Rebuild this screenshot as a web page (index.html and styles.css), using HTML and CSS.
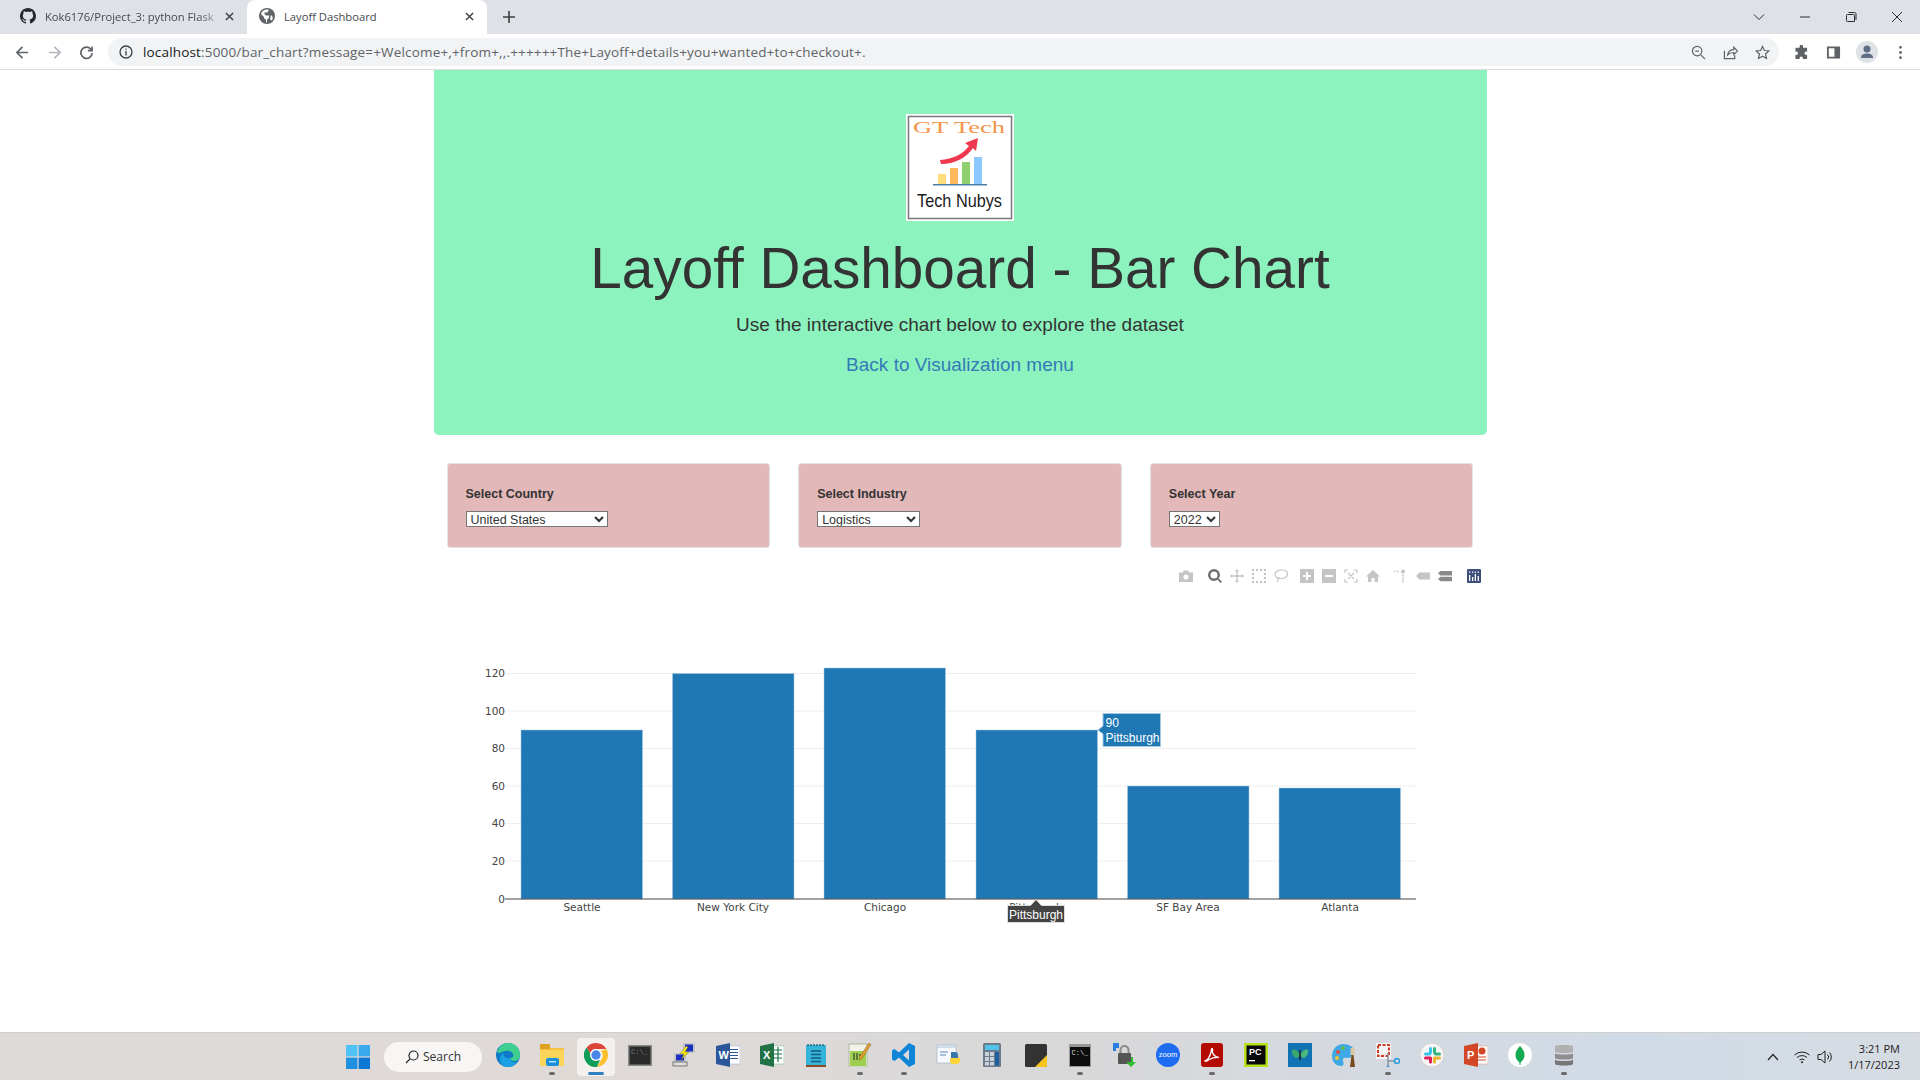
FILE: index.html
```html
<!DOCTYPE html>
<html>
  <head>
    <meta charset="UTF-8" />
    <title>Layoff Dashboard</title>
    <link rel="stylesheet" href="styles.css">
  </head>

  <body>
    <div class="tabstrip">
      <div class="tab">
        <svg class="favicon" viewBox="0 0 16 16"><path fill="#24292f" d="M8 0C3.6 0 0 3.6 0 8c0 3.5 2.3 6.5 5.5 7.6.4.1.5-.2.5-.4v-1.4c-2.2.5-2.7-1.1-2.7-1.1-.4-.9-.9-1.2-.9-1.2-.7-.5.1-.5.1-.5.8.1 1.2.8 1.2.8.7 1.2 1.9.9 2.3.7.1-.5.3-.9.5-1.1-1.8-.2-3.6-.9-3.6-4 0-.9.3-1.6.8-2.1-.1-.2-.4-1 .1-2.1 0 0 .7-.2 2.2.8.6-.2 1.3-.3 2-.3s1.4.1 2 .3c1.5-1 2.2-.8 2.2-.8.4 1.1.2 1.9.1 2.1.5.6.8 1.3.8 2.1 0 3.1-1.9 3.7-3.7 3.9.3.3.6.8.6 1.5v2.2c0 .2.1.5.6.4C13.7 14.5 16 11.5 16 8c0-4.4-3.6-8-8-8z"/></svg>
        <span class="tab-title fade">Kok6176/Project_3: python Flask</span>
        <svg class="tab-close" viewBox="0 0 10 10"><path d="M1 1l8 8M9 1l-8 8"/></svg>
      </div>
      <div class="tab active">
        <svg class="favicon" viewBox="0 0 16 16"><circle cx="8" cy="8" r="8" fill="#5f6368"/><path fill="#fff" d="M7 1.5C4.5 2 2.6 3.800 2 6l3 3v1l2 2v2.300l1 .2v-3l2-1.500V7.500H7L5.500 6V4.500H8l1.500-1.500V1.600z"/><path fill="#fff" d="M11 11.500l2 1 .8-2.500-.8-2.500h-1.500v2z"/></svg>
        <span class="tab-title">Layoff Dashboard</span>
        <svg class="tab-close" viewBox="0 0 10 10"><path d="M1 1l8 8M9 1l-8 8"/></svg>
      </div>
      <svg class="new-tab" viewBox="0 0 12 12"><path d="M6 0v12M0 6h12"/></svg>
      <div class="window-controls">
        <svg viewBox="0 0 12 12"><path d="M1 3.500l5 5 5-5"/></svg>
        <svg viewBox="0 0 12 12"><path d="M1 6h10"/></svg>
        <svg viewBox="0 0 12 12"><path d="M2.500 3.500h6a1 1 0 0 1 1 1v6h-7a1 1 0 0 1-1-1v-5a1 1 0 0 1 1-1zM3.500 1.500h6a1.500 1.500 0 0 1 1.500 1.500v6"/></svg>
        <svg viewBox="0 0 12 12"><path d="M1 1l10 10M11 1L1 11"/></svg>
      </div>
    </div>

    <div class="toolbar">
      <svg class="nav-icon" viewBox="0 0 16 16"><path d="M14 8H2.500M8 2L2 8l6 6"/></svg>
      <svg class="nav-icon off" viewBox="0 0 16 16"><path d="M2 8h11.500M8 2l6 6-6 6"/></svg>
      <svg class="nav-icon" viewBox="0 0 16 16"><path d="M13 5a6 6 0 1 0 1 3.500M14 1.500V6H9.500"/></svg>
      <div class="omnibox">
        <svg class="info" viewBox="0 0 14 14"><circle cx="7" cy="7" r="6"/><path d="M7 6v4.500M7 3.500v1.300"/></svg>
        <span class="url"><b>localhost</b>:5000/bar_chart?message=+Welcome+,+from+,,.++++++The+Layoff+details+you+wanted+to+checkout+.</span>
        <div class="omni-actions">
          <svg viewBox="0 0 16 16"><circle cx="6.500" cy="6.500" r="5"/><path d="M4.500 6.500h4M10.500 10.500l4.500 4.500"/></svg>
          <svg viewBox="0 0 16 16"><path d="M1.500 6v8.500h11V11M5 10.500c.5-3.500 3-5.500 6.500-5.500V2.500L15.500 6.500 11.500 10V8c-2.500 0-5 .8-6.500 2.500z"/></svg>
          <svg viewBox="0 0 16 16"><path d="M8 1.500l2 4.400 4.800.5-3.600 3.200 1 4.700L8 11.900l-4.200 2.400 1-4.700L1.200 6.400 6 5.900z"/></svg>
        </div>
      </div>
      <div class="profile-actions">
        <svg viewBox="0 0 16 16"><path class="solid" d="M6 1.500a1.800 1.800 0 0 1 3.600 0V3H13a1 1 0 0 1 1 1v3h-1a1.800 1.800 0 0 0 0 3.600h1V14a1 1 0 0 1-1 1H9.500v-1a1.800 1.800 0 0 0-3.600 0v1H2.500a1 1 0 0 1-1-1v-3.400h1a1.800 1.800 0 0 0 0-3.600h-1V4a1 1 0 0 1 1-1H6z"/></svg>
        <svg viewBox="0 0 16 16"><path class="solid" d="M1 1.500h14v13H1zM3 3.500v9h6v-9z" fill-rule="evenodd"/></svg>
        <svg class="avatar" viewBox="0 0 22 22"><circle cx="11" cy="11" r="11" fill="#dee1e6"/><circle cx="11" cy="8" r="3.500" fill="#5f6e85"/><path fill="#5f6e85" d="M5 17c0-3.500 3-4.500 6-4.500s6 1 6 4.500z"/></svg>
        <svg viewBox="0 0 16 16"><path class="solid" d="M6.500 2.500a1.500 1.500 0 1 0 3 0 1.500 1.500 0 1 0-3 0M6.500 8a1.500 1.500 0 1 0 3 0 1.500 1.500 0 1 0-3 0M6.500 13.500a1.500 1.500 0 1 0 3 0 1.500 1.500 0 1 0-3 0"/></svg>
      </div>
    </div>

    <div class="page">
      <div class="container">
        <div class="jumbotron">
          <svg class="logo" viewBox="0 0 108 107">
            <rect width="108" height="107" fill="#fff"/>
            <rect x="2.500" y="2.500" width="103" height="102" fill="none" stroke="#777" stroke-width="1.500"/>
            <text x="7" y="19" class="logo-top" textLength="92" lengthAdjust="spacingAndGlyphs">GT Tech</text>
            <path d="M34 46c13-1 23-6 29-14l-4-3 13-5-2 13-3-3c-7 10-18 16-32 16z" fill="#f0384f"/>
            <rect x="32" y="60" width="8" height="10" fill="#ffdd7a"/>
            <rect x="44" y="54" width="8" height="16" fill="#ffb85c"/>
            <rect x="56" y="48" width="8" height="22" fill="#90cf70"/>
            <rect x="68" y="43" width="8" height="27" fill="#8cc8ff"/>
            <rect x="27" y="70" width="54" height="1.500" fill="#4a7fa5"/>
            <text x="11" y="93" class="logo-bottom" textLength="85" lengthAdjust="spacingAndGlyphs">Tech Nubys</text>
          </svg>
          <h1>Layoff Dashboard - Bar Chart</h1>
          <p>Use the interactive chart below to explore the dataset</p>
          <a href="#">Back to Visualization menu</a>
        </div>

        <div class="filters">
          <div class="filter-card">
            <label for="country">Select Country</label>
            <select id="country" class="select-country"><option>United States</option></select>
          </div>
          <div class="filter-card">
            <label for="industry">Select Industry</label>
            <select id="industry" class="select-industry"><option>Logistics</option></select>
          </div>
          <div class="filter-card">
            <label for="year">Select Year</label>
            <select id="year" class="select-year"><option>2022</option></select>
          </div>
        </div>

        <div class="chart">
          <div class="modebar">
            <svg class="m-camera" viewBox="0 0 14 12"><path d="M0 2.500h3.500L5 .5h4l1.500 2H14V12H0z"/><circle cx="7" cy="7" r="2.600" fill="#fff"/></svg>
            <svg class="m-active" viewBox="0 0 14 14"><path d="M6 0a6 6 0 1 0 0 12A6 6 0 1 0 6 0zm0 2.500a3.500 3.500 0 1 1 0 7 3.500 3.500 0 1 1 0-7z" fill-rule="evenodd"/><path d="M9.500 10.800l1.300-1.300 3.200 3.200-1.300 1.300z"/></svg>
            <svg viewBox="0 0 14 14"><path d="M7 0l2 2.200H7.700v4.100h4.100V5L14 7l-2.200 2V7.700H7.700v4.100H9L7 14l-2-2.200h1.300V7.700H2.200V9L0 7l2.200-2v1.300h4.100V2.200H5z"/></svg>
            <svg viewBox="0 0 14 14"><path d="M0 0h2v2H0zM4 0h2v2H4zM8 0h2v2H8zM12 0h2v2h-2zM0 4h2v2H0zM12 4h2v2h-2zM0 8h2v2H0zM12 8h2v2h-2zM0 12h2v2H0zM4 12h2v2H4zM8 12h2v2H8zM12 12h2v2h-2z"/></svg>
            <svg viewBox="0 0 14 14"><path class="hollow" d="M7.500 1c3.500 0 6 1.600 6 4s-3 4.500-6.500 4.500C3.500 9.500 1 7.800 1 5.300S4 1 7.500 1zM3.500 8.500c.8 1.500.5 3.200-.3 4.700"/></svg>
            <svg class="m-gap-small" viewBox="0 0 14 14"><path d="M0 0h14v14H0zM6 3v3H3v2h3v3h2V8h3V6H8V3z" fill-rule="evenodd"/></svg>
            <svg viewBox="0 0 14 14"><path d="M0 0h14v14H0zM3 6v2h8V6z" fill-rule="evenodd"/></svg>
            <svg viewBox="0 0 14 14"><path class="hollow" d="M1 4V1h3M10 1h3v3M13 10v3h-3M4 13H1v-3M4 4l6 6M10 4l-6 6"/></svg>
            <svg viewBox="0 0 14 14"><path d="M7 1L0 7.500h2V13h3.500V9h3v4H12V7.500h2z"/></svg>
            <svg class="m-gap" viewBox="0 0 14 14"><circle cx="9" cy="2.500" r="2"/><path d="M8.300 5.500h1.400v2H8.300zM8.300 8.500h1.400v2H8.300zM8.300 11.500h1.400v2H8.300zM0 1.800h1.500v1.500H0zM3 1.800h1.500v1.500H3z"/></svg>
            <svg viewBox="0 0 14 14"><path d="M0 7l3.500-3.500H14v7H3.500z"/></svg>
            <svg class="m-dark" viewBox="0 0 14 14"><path d="M2.500 2H14v4.500H2.500L0 4.300zM2.500 7.800H14v4.400H2.500L0 10z"/></svg>
            <svg class="m-logo" viewBox="0 0 14 14"><rect width="14" height="14" rx="1" fill="#3d4f7a"/><g fill="#fff"><rect x="2" y="6" width="1.300" height="6"/><rect x="5" y="8" width="1.300" height="4"/><rect x="7.700" y="5" width="1.300" height="7"/><rect x="10.600" y="7" width="1.300" height="5"/><rect x="2" y="2.500" width="1.300" height="1.300"/><rect x="5" y="2.500" width="1.300" height="1.300"/><rect x="7.700" y="2.500" width="1.300" height="1.300"/><rect x="10.600" y="2.500" width="1.300" height="1.300"/></g></svg>
          </div>

          <svg class="plot" viewBox="434 561 1053 470">
            <g class="grid">
              <path d="M505 673.500H1416M505 711H1416M505 748.500H1416M505 786H1416M505 823.500H1416M505 861H1416"/>
            </g>
            <g class="bars">
              <rect x="521" y="730" width="121.500" height="169"/>
              <rect x="672.500" y="673.500" width="121.500" height="225.500"/>
              <rect x="824" y="668" width="121.500" height="231"/>
              <rect x="976" y="730" width="121.500" height="169"/>
              <rect x="1127.500" y="786" width="121.500" height="113"/>
              <rect x="1279" y="788" width="121.500" height="111"/>
            </g>
            <path class="axis" d="M505 899H1416"/>
            <g class="tick-y">
              <text x="505" y="677">120</text>
              <text x="505" y="715">100</text>
              <text x="505" y="752">80</text>
              <text x="505" y="790">60</text>
              <text x="505" y="827">40</text>
              <text x="505" y="865">20</text>
              <text x="505" y="903">0</text>
            </g>
            <g class="tick-x">
              <text x="582" y="911">Seattle</text>
              <text x="733" y="911">New York City</text>
              <text x="885" y="911">Chicago</text>
              <text x="1036" y="911">Pittsburgh</text>
              <text x="1188" y="911">SF Bay Area</text>
              <text x="1340" y="911">Atlanta</text>
            </g>
            <path class="hover-blue" d="M1103 713.500h57.500v33H1103v-12.500l-5-4 5-4z"/>
            <text class="hover-text" x="1105.500" y="727">90</text>
            <text class="hover-text" x="1105.500" y="742">Pittsburgh</text>
            <path class="hover-dark" d="M1007.500 905.500h23l5.500-6 5.500 6h23v17h-57z"/>
            <text class="hover-text centered" x="1036" y="918.500">Pittsburgh</text>
          </svg>
        </div>
      </div>
    </div>

    <div class="taskbar">
      <svg class="start" viewBox="0 0 24 24"><rect width="11.400" height="11.400" fill="#4fc3f7"/><rect x="12.600" width="11.400" height="11.400" fill="#38a9ec"/><rect y="12.600" width="11.400" height="11.400" fill="#1e90e0"/><rect x="12.600" y="12.600" width="11.400" height="11.400" fill="#0a78d4"/></svg>
      <div class="search">
        <svg viewBox="0 0 14 14"><circle cx="8.500" cy="5.500" r="4.500"/><path d="M5.300 8.700L1 13"/></svg>
        <span>Search</span>
      </div>
      <div class="apps">
        <div class="app"><svg viewBox="0 0 24 24"><circle cx="12" cy="12" r="12" fill="#0f7bc8"/><path d="M1 9C3 3 8 0 12 0c7 0 12 5 12 12 0 4-3 6-6 6-2 0-4-1-4-3 3 0 4-2 3-4-1-3-5-4-8-3-4 1-7 3-8 1z" fill="#3fcf8e"/><path d="M14 15c0 3 3 5 7 4-2 3-5 5-9 5-5 0-8-4-8-8 0-3 2-5 4-6-1 3 1 6 6 5z" fill="#1ba1e2"/></svg></div>
        <div class="app running"><svg viewBox="0 0 24 24"><path d="M0 3h9l2 2h13v18H0z" fill="#f5c242"/><rect y="1" width="10" height="5" rx="1" fill="#e0a020"/><path d="M0 7h24v16H0z" fill="#fbd55a"/><rect x="6" y="15" width="13" height="8" rx="2" fill="#1890df"/><rect x="9" y="18" width="7" height="1.500" fill="#fff" opacity=".7"/></svg></div>
        <div class="app active"><svg viewBox="0 0 24 24"><path d="M12 0a12 12 0 0 1 10.400 6H12a6 6 0 0 0-5.800 4.500L2.700 4.400A12 12 0 0 1 12 0z" fill="#db4437"/><path d="M22.400 6A12 12 0 0 1 13 24l5.200-9A6 6 0 0 0 16.500 8z" fill="#fbc02d"/><path d="M13 24A12 12 0 0 1 2.700 4.400L8 13.500a6 6 0 0 0 8.500 2z" fill="#0f9d58"/><circle cx="12" cy="12" r="6" fill="#fff"/><circle cx="12" cy="12" r="4.700" fill="#4a86e8"/></svg></div>
        <div class="app"><svg viewBox="0 0 24 24"><rect y="2" width="24" height="21" fill="#888"/><rect x="1.500" y="3.500" width="21" height="18" fill="#2a2a2a"/><text x="3" y="11" class="icon-text faint">C:\_</text></svg></div>
        <div class="app"><svg viewBox="0 0 24 24"><rect x="11" y="0" width="12" height="10" fill="#c6c6c6"/><rect x="13" y="1.500" width="8" height="7" fill="#1a2fc0"/><rect x="2" y="10" width="12" height="9" fill="#c6c6c6"/><rect x="4" y="11.500" width="8" height="6" fill="#1a2fc0"/><rect x="1" y="19" width="14" height="4" fill="#ddd" stroke="#333" stroke-width=".6"/><path d="M14 3L8 11h4l-3 6 8-8h-4l3-5z" fill="#f5e614" stroke="#333" stroke-width=".3"/></svg></div>
        <div class="app"><svg viewBox="0 0 24 24"><rect x="8" y="3" width="16" height="18" fill="#fff" stroke="#9db4d8" stroke-width=".6"/><path d="M13 6.500h9M13 9.500h9M13 12.500h9M13 15.500h9" stroke="#2b579a" stroke-width="1.200"/><path d="M0 3l14-3v24L0 21z" fill="#2b579a"/><text x="2.500" y="15.500" class="icon-text letter">W</text></svg></div>
        <div class="app"><svg viewBox="0 0 24 24"><rect x="8" y="3" width="16" height="18" fill="#fff" stroke="#8bbf9f" stroke-width=".6"/><path d="M14 7h8M14 11h8M14 15h8M18 4v15" stroke="#217346" stroke-width="1.200"/><path d="M0 3l14-3v24L0 21z" fill="#217346"/><text x="3" y="15.500" class="icon-text letter">X</text></svg></div>
        <div class="app"><svg viewBox="0 0 24 24"><rect x="2" y="2" width="20" height="20" fill="#36b4d8"/><rect x="2" y="22" width="20" height="2" fill="#8a4b20"/><path d="M4 1v2M7 1v2M10 1v2M13 1v2M16 1v2M19 1v2" stroke="#1a5670" stroke-width="1.200"/><path d="M7 8h10M7 11.500h10M7 15h10M7 18.500h10" stroke="#155a80" stroke-width="1.500"/></svg></div>
        <div class="app running"><svg viewBox="0 0 24 24"><rect x="1" y="1" width="18" height="23" fill="#f2f2e8" stroke="#8a9a70" stroke-width=".6"/><rect x="2" y="8" width="16" height="15" fill="#9fcf50"/><path d="M6 10v7M9 10v7M11 12h2" stroke="#222" stroke-width="1"/><path d="M21 0l2 1.500-9 14-3 1.500.5-3z" fill="#e0a030" stroke="#7a4a20" stroke-width=".4"/></svg></div>
        <div class="app running"><svg viewBox="0 0 24 24"><path d="M17 0l6 3v18l-6 3-10-9.500L2.500 18 0 16.500v-9L2.500 6 7 9.500zM17 6.500L11 12l6 5.500z" fill="#0f85d8" fill-rule="evenodd"/></svg></div>
        <div class="app"><svg viewBox="0 0 24 24"><rect x="1" y="2" width="19" height="18" fill="#f5f8fc" stroke="#9ab" stroke-width=".6"/><rect x="1" y="2" width="19" height="3" fill="#cfdcec"/><path d="M4 9h8M4 12h6" stroke="#5a86b8" stroke-width="1.200"/><path d="M15 9h4c2 0 3 1 3 3v3h-7z" fill="#3776ab"/><path d="M24 13v5c0 2-2 3-4 3h-3c-2 0-3-1-3-3v-3h6c2 0 4 0 4-2z" fill="#ffd43b"/></svg></div>
        <div class="app"><svg viewBox="0 0 24 24"><rect x="3" y="0" width="18" height="24" rx="1.500" fill="#6c7a89"/><rect x="5" y="2" width="14" height="5" fill="#4fc3e8"/><g fill="#c8d0d8"><rect x="5" y="9" width="4" height="4"/><rect x="10" y="9" width="4" height="4"/><rect x="5" y="14" width="4" height="4"/><rect x="10" y="14" width="4" height="4"/><rect x="5" y="19" width="4" height="3.500"/><rect x="10" y="19" width="4" height="3.500"/></g><rect x="15" y="9" width="4" height="13.500" fill="#1f5f9f"/></svg></div>
        <div class="app"><svg viewBox="0 0 24 24"><rect x="1" y="1" width="22" height="23" rx="1.500" fill="#333"/><path d="M23 12v10.500a1.500 1.500 0 0 1-1.500 1.500H11z" fill="#f8c51c"/></svg></div>
        <div class="app running"><svg viewBox="0 0 24 24"><rect x="1" y="1" width="22" height="23" fill="#999"/><rect x="2" y="4" width="20" height="19" fill="#0c0c0c"/><text x="3.500" y="12" class="icon-text light">C:\_</text></svg></div>
        <div class="app"><svg viewBox="0 0 24 24"><path d="M1 0h6v5H4v3H1z" fill="#2a7de1"/><rect x="6" y="10" width="13" height="11" rx="1" fill="#555"/><path d="M8.500 10V7a4 4 0 0 1 8 0v3" fill="none" stroke="#8a8a8a" stroke-width="2"/><path d="M19 14h2v5h3l-5 5-5-5h5z" fill="#2ebd2e"/></svg></div>
        <div class="app"><svg viewBox="0 0 24 24"><ellipse cx="12" cy="12" rx="12" ry="12" fill="#1e6cf0"/><text x="12" y="14" class="icon-text zoom-word">zoom</text></svg></div>
        <div class="app running"><svg viewBox="0 0 24 24"><rect x="1" y="0" width="22" height="24" rx="3" fill="#b30b00"/><path d="M5 18c3-1 5-5 6-9 .3-1.500.2-3.500 1-3.500s.8 2 .3 3.500c1 3 3 5 6.500 5.500-3-.2-7 .5-9.500 2-1.500 1-3 2.500-4.300 1.500z" fill="none" stroke="#fff" stroke-width="1.300"/></svg></div>
        <div class="app"><svg viewBox="0 0 24 24"><rect width="24" height="24" fill="#b6e21e"/><rect x="2.500" y="2.500" width="19" height="19" fill="#0a0a0a"/><text x="5" y="12" class="icon-text pc">PC</text><rect x="5" y="17" width="6" height="1.300" fill="#fff"/></svg></div>
        <div class="app"><svg viewBox="0 0 24 24"><rect width="24" height="24" fill="#1173b4"/><path d="M12 12C9 6 5 6 4 7c-1 2 1 7 4 8 2 0 3-1 4-3z" fill="#3aa86a"/><path d="M12 12c3-6 7-6 8-5 1 2-1 7-4 8-2 0-3-1-4-3z" fill="#4ab878"/><path d="M12 7v10" stroke="#222" stroke-width="1.500"/></svg></div>
        <div class="app"><svg viewBox="0 0 24 24"><path d="M11 1C5 1 0 6 0 13c0 6 4 10 9 10 3 0 3-3 2-5s1-4 4-3c4 .5 7-3 7-7 0-4-5-7-11-7z" fill="#3fa9e6"/><circle cx="6" cy="9" r="2" fill="#e24b3b"/><circle cx="11" cy="5" r="2" fill="#5cc04b"/><circle cx="5" cy="15" r="2" fill="#f2c230"/><path d="M18 24l1.500-12h2L23 24z" fill="#7a4a20"/><rect x="18.500" y="5" width="4" height="7" fill="#d8c8a8"/></svg></div>
        <div class="app running"><svg viewBox="0 0 24 24"><rect width="15" height="16" fill="#f5f5f5"/><path d="M2 2h11v11H2z" fill="none" stroke="#d0382a" stroke-width="2" stroke-dasharray="3 1.500"/><path d="M12 10v14M12 18h7" stroke="#8a96a3" stroke-width="1.500"/><circle cx="21" cy="18" r="2.500" fill="none" stroke="#2a9ad8" stroke-width="1.500"/><circle cx="12" cy="24" r="1.500" fill="#2a9ad8"/></svg></div>
        <div class="app"><svg viewBox="0 0 24 24"><circle cx="12" cy="12" r="12" fill="#f6f4f4" stroke="#bbb" stroke-width=".5"/><rect x="9" y="4" width="3" height="7" rx="1.500" fill="#36c5f0"/><rect x="4" y="9.500" width="7" height="3" rx="1.500" fill="#36c5f0"/><rect x="13" y="4" width="3" height="7" rx="1.500" fill="#2eb67d"/><rect x="14" y="9.500" width="7" height="3" rx="1.500" fill="#2eb67d"/><rect x="13" y="13.500" width="3" height="7" rx="1.500" fill="#ecb22e"/><rect x="14" y="13.500" width="7" height="3" rx="1.500" fill="#ecb22e"/><rect x="9" y="13.500" width="3" height="7" rx="1.500" fill="#e01e5a"/><rect x="4" y="13.500" width="7" height="3" rx="1.500" fill="#e01e5a"/></svg></div>
        <div class="app"><svg viewBox="0 0 24 24"><rect x="10" y="3" width="14" height="18" fill="#fff" stroke="#e0a090" stroke-width=".6"/><circle cx="18" cy="8" r="3.500" fill="#d24726"/><path d="M13 14h9M13 17h9" stroke="#d24726" stroke-width="1.200"/><path d="M0 3l14-3v24L0 21z" fill="#d24726"/><text x="3" y="16" class="icon-text letter">P</text></svg></div>
        <div class="app"><svg viewBox="0 0 24 24"><circle cx="12" cy="12" r="12" fill="#fff"/><path d="M12 3c3 3 4.500 6 4.500 9 0 4-2.500 6-4 7.500V22h-1v-2.500c-1.500-1.500-4-3.500-4-7.500 0-3 1.500-6 4.500-9z" fill="#13aa52"/></svg></div>
        <div class="app running"><svg viewBox="0 0 24 24"><path d="M3 3.500C3 1.500 21 1.500 21 3.500v5C21 10.500 3 10.500 3 8.500z" fill="#b0b0b0"/><path d="M3 10c0 2 18 2 18 0v5c0 2-18 2-18 0z" fill="#8e8e8e"/><path d="M3 16.500c0 2 18 2 18 0V21c0 2-18 2-18 0z" fill="#767676"/></svg></div>
      </div>
      <div class="tray">
        <svg class="tray-chevron" viewBox="0 0 12 8"><path d="M1 7l5-5.500L11 7"/></svg>
        <svg class="tray-icon" viewBox="0 0 16 14"><path d="M.5 5a11 11 0 0 1 15 0M3 7.500a7.500 7.500 0 0 1 10 0M5.500 10a4 4 0 0 1 5 0"/><circle cx="8" cy="12.300" r="1" fill="#222" stroke="none"/></svg>
        <svg class="tray-icon" viewBox="0 0 16 14"><path d="M1 4.500h3L8 1v12L4 9.500H1zM10.500 4.500a3.500 3.500 0 0 1 0 5M12.500 2.500a6.500 6.500 0 0 1 0 9"/></svg>
        <div class="clock">
          <span>3:21 PM</span>
          <span>1/17/2023</span>
        </div>
      </div>
    </div>
  </body>
</html>
```

FILE: styles.css
```css
* {
  box-sizing: border-box;
}

body {
  margin: 0;
  height: 1080px;
  overflow: hidden;
  display: flex;
  flex-direction: column;
  background-color: #fff;
  color: #333;
  font-family: "Liberation Sans", Arial, sans-serif;
}

/* browser chrome */
.tabstrip {
  height: 34px;
  flex: none;
  display: flex;
  align-items: center;
  padding-left: 8px;
  background-color: #dee1e6;
}

.tab {
  width: 239px;
  height: 34px;
  flex: none;
  display: flex;
  align-items: center;
  padding: 0 12px 2px 12px;
  color: #45494e;
  font-family: "Open Sans", sans-serif;
  font-size: 11.200px;
}

.tab.active {
  position: relative;
  width: 240px;
  background-color: #fff;
  border-radius: 8px 8px 0 0;
}

.favicon {
  width: 16px;
  height: 16px;
  flex: none;
}

.tab-title {
  flex: 1;
  margin-left: 9px;
  white-space: nowrap;
  overflow: hidden;
}

.tab-title.fade {
  -webkit-mask-image: linear-gradient(90deg, #000 85%, transparent);
  mask-image: linear-gradient(90deg, #000 85%, transparent);
}

.tab-close {
  width: 9px;
  height: 9px;
  flex: none;
  margin-right: 1px;
  fill: none;
  stroke: #3c4043;
  stroke-width: 1.600;
}

.new-tab {
  width: 12px;
  height: 12px;
  margin-left: 16px;
  fill: none;
  stroke: #3c4043;
  stroke-width: 1.600;
}

.window-controls {
  margin-left: auto;
  margin-right: 17px;
  display: flex;
  gap: 34px;
}

.window-controls svg {
  width: 12px;
  height: 12px;
  fill: none;
  stroke: #2b2d30;
  stroke-width: 1;
}

.toolbar {
  height: 36px;
  flex: none;
  display: flex;
  align-items: center;
  padding: 1px 0 0 15px;
  background-color: #fff;
  border-bottom: 1px solid #d9dbde;
}

.nav-icon {
  width: 15px;
  height: 15px;
  margin-right: 17px;
  fill: none;
  stroke: #5f6368;
  stroke-width: 1.800;
}

.nav-icon.off {
  stroke: #b4b7bb;
}

.omnibox {
  width: 1671px;
  height: 28px;
  margin-left: -3px;
  display: flex;
  align-items: center;
  padding: 0 9px 0 11px;
  background-color: #f1f3f4;
  border-radius: 14px;
}

.info {
  width: 14px;
  height: 14px;
  fill: none;
  stroke: #3c4043;
  stroke-width: 1.300;
}

.url {
  margin-left: 10px;
  color: #5f6368;
  font-family: "Open Sans", sans-serif;
  font-size: 13.500px;
  letter-spacing: 0.170px;
  white-space: nowrap;
}

.url b {
  color: #202124;
  font-weight: 400;
}

.omni-actions {
  margin-left: auto;
  display: flex;
  gap: 17px;
}

.omni-actions svg {
  width: 15px;
  height: 15px;
  fill: none;
  stroke: #5f6368;
  stroke-width: 1.300;
}

.profile-actions {
  display: flex;
  align-items: center;
  margin-left: 15px;
  gap: 17px;
}

.profile-actions svg {
  width: 15px;
  height: 15px;
}

.profile-actions .avatar {
  width: 22px;
  height: 22px;
  margin: 0 -2px;
}

.solid {
  fill: #5f6368;
}

/* page */
.page {
  flex: 1;
  min-height: 0;
  overflow: hidden;
}

.container {
  width: 1053px;
  margin: 0 auto;
}

.jumbotron {
  height: 365px;
  padding-top: 44px;
  display: flex;
  flex-direction: column;
  align-items: center;
  background-color: #8cf3bf;
  border-radius: 0 0 5px 5px;
}

.logo {
  width: 108px;
  height: 107px;
  flex: none;
}

.logo-top {
  fill: #f4944a;
  font-family: "Liberation Serif", serif;
  font-size: 17px;
}

.logo-bottom {
  fill: #1b1b1b;
  font-family: "Liberation Sans", sans-serif;
  font-size: 19px;
}

h1 {
  margin: 15px 0 0 0;
  color: #333;
  font-size: 56.700px;
  font-weight: 400;
  line-height: 66px;
}

.jumbotron p {
  margin: 11px 0 0 0;
  font-size: 19px;
  line-height: 24px;
}

.jumbotron a {
  margin-top: 15px;
  color: #337ab7;
  font-size: 19px;
  line-height: 26px;
  text-decoration: none;
}

.filters {
  display: grid;
  grid-template-columns: repeat(3, 1fr);
  gap: 28px;
  padding: 28px 13px 0 13px;
}

.filter-card {
  height: 85px;
  padding: 23px 18px 0 18px;
  background-color: #e2b8b8;
  border: 1px solid #e3e3e3;
  border-radius: 3px;
}

label {
  display: block;
  margin-bottom: 9px;
  font-size: 12.500px;
  font-weight: bold;
  line-height: 15px;
}

select {
  display: block;
  height: 16px;
  padding: 0;
  background-color: #fff;
  color: #333;
  font-family: "Liberation Sans", Arial, sans-serif;
  font-size: 12.500px;
  line-height: 14px;
  border: 1px solid #767676;
  border-radius: 0;
}

.select-country {
  width: 142px;
}

.select-industry {
  width: 103px;
}

.select-year {
  width: 51px;
}

/* chart */
.chart {
  position: relative;
  margin-top: 13px;
}

.plot {
  display: block;
  width: 1053px;
  height: 470px;
}

.modebar {
  position: absolute;
  top: 8px;
  right: 6px;
  display: flex;
  align-items: center;
  gap: 8px;
}

.modebar svg {
  width: 14px;
  height: 14px;
  fill: #c4c4c4;
}

.modebar .m-camera {
  margin-right: 7px;
}

.modebar .m-active {
  fill: #6e6e6e;
}

.modebar .m-dark {
  fill: #8a8a8a;
  margin-right: 7px;
}

.modebar .m-gap {
  margin-left: 6px;
}

.modebar .m-gap-small {
  margin-left: 4px;
}

.modebar .hollow {
  fill: none;
  stroke: #c4c4c4;
  stroke-width: 1.200;
}

.grid path {
  fill: none;
  stroke: #eee;
  stroke-width: 1;
}

.bars rect {
  fill: #1f77b4;
  stroke: #a5c8e1;
  stroke-width: 0.500;
}

.axis {
  fill: none;
  stroke: #444;
  stroke-width: 1;
}

.tick-y text,
.tick-x text {
  fill: #444;
  font-family: "DejaVu Sans", Verdana, sans-serif;
  font-size: 10.500px;
}

.tick-y text {
  text-anchor: end;
}

.tick-x text {
  text-anchor: middle;
}

.hover-blue {
  fill: #1f77b4;
  stroke: #a5c8e1;
  stroke-width: 1;
}

.hover-dark {
  fill: #444;
  stroke: #ddd;
  stroke-width: 1;
}

.hover-text {
  fill: #fff;
  font-family: "Liberation Sans", Arial, sans-serif;
  font-size: 12px;
}

.hover-text.centered {
  text-anchor: middle;
}

/* taskbar */
.taskbar {
  height: 48px;
  flex: none;
  display: flex;
  align-items: center;
  padding-left: 346px;
  background: linear-gradient(90deg, #dcd9d7 0%, #e0dad7 30%, #d7d8da 60%, #d1dbe7 85%, #d6dce2 100%);
  border-top: 1px solid #cfcfcf;
}

.start {
  width: 24px;
  height: 24px;
  flex: none;
}

.search {
  width: 98px;
  height: 30px;
  flex: none;
  margin-left: 14px;
  display: flex;
  align-items: center;
  justify-content: center;
  gap: 4px;
  background-color: #f8f6f5;
  border-radius: 15px;
  color: #333;
  font-family: "Open Sans", sans-serif;
  font-size: 12px;
}

.search svg {
  width: 14px;
  height: 14px;
  fill: none;
  stroke: #222;
  stroke-width: 1.200;
}

.apps {
  display: flex;
  margin-left: 4px;
}

.app {
  position: relative;
  width: 44px;
  height: 38px;
  display: flex;
  align-items: center;
  justify-content: center;
}

.app svg {
  width: 24px;
  height: 24px;
  margin-top: -4px;
}

.app.active::before {
  content: "";
  position: absolute;
  top: 0;
  bottom: 0;
  left: 3px;
  right: 3px;
  background-color: #f3f0ee;
  border-radius: 4px;
}

.app.active svg {
  position: relative;
}

.app.running::after,
.app.active::after {
  content: "";
  position: absolute;
  left: 19px;
  bottom: 1px;
  width: 6px;
  height: 3px;
  background-color: #6b6b6b;
  border-radius: 2px;
}

.app.active::after {
  left: 14px;
  width: 16px;
  background-color: #2f7fc1;
}

.icon-text {
  font-family: "Liberation Mono", monospace;
}

.icon-text.faint {
  fill: #777;
  font-size: 7px;
}

.icon-text.light {
  fill: #ddd;
  font-size: 7px;
}

.icon-text.letter {
  fill: #fff;
  font-family: "Liberation Sans", sans-serif;
  font-size: 11px;
  font-weight: bold;
}

.icon-text.zoom-word {
  fill: #fff;
  font-family: "Liberation Sans", sans-serif;
  font-size: 7.500px;
  text-anchor: middle;
}

.icon-text.pc {
  fill: #fff;
  font-family: "Liberation Sans", sans-serif;
  font-size: 9px;
  font-weight: bold;
}

.tray {
  margin-left: auto;
  margin-right: 20px;
  display: flex;
  align-items: center;
}

.tray-chevron {
  width: 12px;
  height: 8px;
  margin-right: 15px;
  fill: none;
  stroke: #222;
  stroke-width: 1.200;
}

.tray-icon {
  width: 16px;
  height: 14px;
  margin-right: 7px;
  fill: none;
  stroke: #222;
  stroke-width: 1;
}

.clock {
  display: flex;
  flex-direction: column;
  align-items: flex-end;
  margin-left: 8px;
  color: #222;
  font-family: "Open Sans", sans-serif;
  font-size: 11px;
  line-height: 16px;
}
```
